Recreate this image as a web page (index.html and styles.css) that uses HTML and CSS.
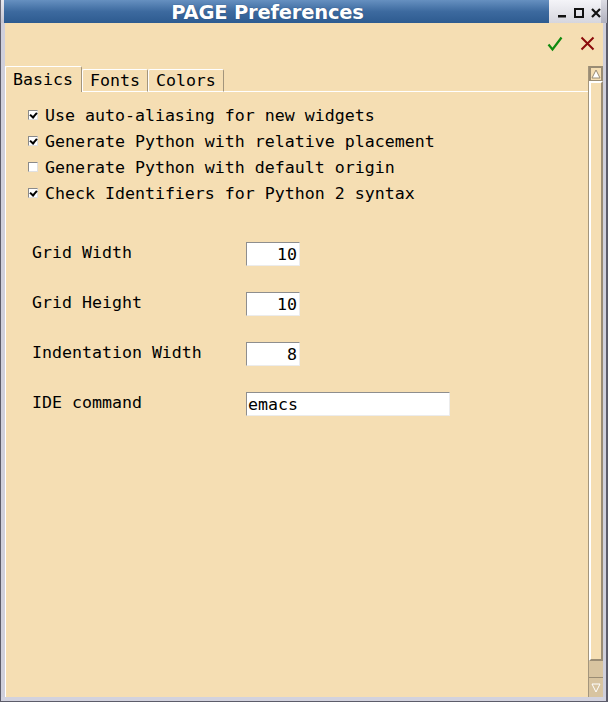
FILE: index.html
```html
<!DOCTYPE html>
<html>
<head>
<meta charset="utf-8">
<link rel="stylesheet" href="styles.css">
</head>
<body>
<div class="window">
  <div class="titlebar">
    <div class="tb-left"></div>
    <div class="tb-title">PAGE Preferences</div>
    <div class="tb-buttons">
      <svg width="9" height="10" viewBox="0 0 9 10"><rect x="0" y="7" width="8" height="2.5" fill="#111"/></svg>
      <svg width="10" height="10" viewBox="0 0 10 10"><rect x="1" y="1" width="8" height="8" fill="none" stroke="#111" stroke-width="2"/></svg>
      <svg width="10" height="10" viewBox="0 0 10 10"><path d="M1 1 L9 9 M9 1 L1 9" stroke="#111" stroke-width="2.2"/></svg>
    </div>
    <div class="tb-right"></div>
  </div>
  <div class="frame">
    <div class="border-left"></div>
    <div class="client">
      <div class="toolbar">
        <svg class="ok" width="16" height="16" viewBox="0 0 16 16"><path d="M1.5 8.5 L5.5 13.5 L14.5 1.5" fill="none" stroke="#0f8a0f" stroke-width="2.2"/></svg>
        <svg class="cancel" width="15" height="15" viewBox="0 0 15 15"><path d="M1.5 1.5 L13.5 13.5 M13.5 1.5 L1.5 13.5" fill="none" stroke="#8b0a0a" stroke-width="2"/></svg>
      </div>
      <div class="lower">
        <div class="notebook">
          <div class="tabs">
            <div class="tab active">Basics</div>
            <div class="tab">Fonts</div>
            <div class="tab">Colors</div>
            <div class="tab-fill"></div>
          </div>
          <div class="pane">
            <div class="checks">
              <label class="check"><span class="box on"></span>Use auto-aliasing for new widgets</label>
              <label class="check"><span class="box on"></span>Generate Python with relative placement</label>
              <label class="check"><span class="box"></span>Generate Python with default origin</label>
              <label class="check"><span class="box on"></span>Check Identifiers for Python 2 syntax</label>
            </div>
            <div class="form">
              <div class="row"><span class="lbl">Grid Width</span><span class="entry num">10</span></div>
              <div class="row"><span class="lbl">Grid Height</span><span class="entry num">10</span></div>
              <div class="row"><span class="lbl">Indentation Width</span><span class="entry num">8</span></div>
              <div class="row"><span class="lbl">IDE command</span><span class="entry wide">emacs</span></div>
            </div>
          </div>
        </div>
        <div class="scrollbar">
          <div class="arrow up"><svg width="10" height="10" viewBox="0 0 10 10"><path d="M1 9 L5 1 L9 9 Z" fill="#fff" stroke="#9a8c74" stroke-width="1"/></svg></div>
          <div class="slider"></div>
          <div class="trough"></div>
          <div class="arrow down"><svg width="10" height="10" viewBox="0 0 10 10"><path d="M1 1 L5 9 L9 1 Z" fill="#d8c4a0" stroke="#fff" stroke-width="1"/></svg></div>
        </div>
      </div>
    </div>
    <div class="border-right"></div>
  </div>
  <div class="border-bottom"></div>
</div>
</body>
</html>
```

FILE: styles.css
```css
html, body {
  margin: 0;
  padding: 0;
  background: #d4d4de;
}
.window {
  width: 608px;
  height: 702px;
  display: flex;
  flex-direction: column;
  font-family: "DejaVu Sans Mono", monospace;
  font-size: 16.6px;
  color: #000;
}
.titlebar {
  height: 23px;
  display: flex;
  flex: none;
}
.tb-left {
  width: 3px;
  background: linear-gradient(#e8e8ee, #c4c4d0);
  border-left: 1px solid #6a6a78;
}
.tb-title {
  flex: 1;
  background: linear-gradient(#6690c0, #3d6a9f 50%, #2d5b90);
  color: #fff;
  font-family: "DejaVu Sans", sans-serif;
  font-weight: bold;
  font-size: 19.5px;
  letter-spacing: -0.2px;
  text-align: center;
  line-height: 25px;
  padding-right: 18px;
  text-shadow: 0 0 1px #1d3d66;
  white-space: nowrap;
}
.tb-buttons {
  width: 52px;
  background: linear-gradient(#f4f4f8, #d6d6de);
  display: flex;
  align-items: center;
  justify-content: flex-start;
  padding-left: 9px;
  gap: 7px;
  padding-top: 3px;
  box-sizing: border-box;
}
.tb-right {
  width: 6px;
  background: linear-gradient(#dcdce4, #b0b0be);
  border-right: 1px solid #55555f;
}
.frame {
  flex: 1;
  display: flex;
  min-height: 0;
}
.border-left {
  width: 4px;
  background: #cfcfdb;
  border-left: 1px solid #5c5c6a;
}
.border-right {
  width: 3px;
  background: #cfcfdb;
  border-right: 2px solid #5c5c6a;
}
.border-bottom {
  height: 4px;
  background: #d2d2de;
  border-bottom: 1px solid #5c5c6a;
  border-left: 1px solid #5c5c6a;
  border-right: 2px solid #5c5c6a;
}
.client {
  flex: 1;
  background: #f5deb3;
  display: flex;
  flex-direction: column;
  min-width: 0;
}
.toolbar {
  height: 43px;
  flex: none;
  display: flex;
  justify-content: flex-end;
  align-items: flex-start;
  padding-top: 13px;
  padding-right: 8px;
  box-sizing: border-box;
  gap: 17px;
}
.lower {
  flex: 1;
  display: flex;
  min-height: 0;
}
.notebook {
  flex: 1;
  display: flex;
  flex-direction: column;
  border-left: 1px solid #fff;
}
.tabs {
  height: 26px;
  display: flex;
  align-items: flex-end;
  flex: none;
}
.tab {
  height: 23px;
  box-sizing: border-box;
  border-top: 1px solid #fff;
  border-left: 1px solid #fff;
  border-right: 1px solid #a3957c;
  border-bottom: 1px solid #fff;
  padding: 0 7px 0 7px;
  line-height: 22px;
  font-size: 16.6px;
  border-radius: 2px 2px 0 0;
}
.tab.active {
  height: 26px;
  border-bottom: none;
  line-height: 25px;
  padding: 0 8px 0 7px;
  margin-left: -1px;
}
.tab-fill {
  flex: 1;
  border-bottom: 1px solid #fff;
  height: 1px;
}
.pane {
  flex: 1;
  padding: 10px 0 0 22px;
}
.checks {
  display: flex;
  flex-direction: column;
}
.check {
  height: 26px;
  display: flex;
  align-items: center;
  gap: 7px;
  white-space: nowrap;
}
.box {
  width: 10px;
  height: 10px;
  box-sizing: border-box;
  background: #fff;
  border-top: 1px solid #8a8a8a;
  border-left: 1px solid #8a8a8a;
  border-right: 1px solid #e0e0e0;
  border-bottom: 1px solid #e0e0e0;
  position: relative;
  flex: none;
}
.box.on::after {
  content: "";
  position: absolute;
  left: 2px;
  top: 0px;
  width: 3px;
  height: 5px;
  border-right: 2px solid #000;
  border-bottom: 2px solid #000;
  transform: rotate(40deg);
}
.form {
  margin-top: 22px;
  padding-left: 4px;
  display: flex;
  flex-direction: column;
}
.row {
  height: 50px;
  display: flex;
  align-items: center;
}
.lbl {
  width: 214px;
  white-space: nowrap;
  margin-top: -2px;
}
.entry {
  height: 24px;
  box-sizing: border-box;
  background: #fff;
  border-top: 1px solid #8e8e8e;
  border-left: 1px solid #8e8e8e;
  border-right: 1px solid #ececec;
  border-bottom: 1px solid #ececec;
  line-height: 23px;
  margin-top: 2px;
}
.entry.num {
  width: 54px;
  text-align: right;
  padding-right: 2px;
}
.entry.wide {
  width: 204px;
  padding-left: 1px;
}
.scrollbar {
  width: 14px;
  display: flex;
  flex-direction: column;
  background: #d8c4a0;
  border-left: 1px solid #a3957c;
}
.arrow {
  height: 15px;
  display: flex;
  align-items: center;
  justify-content: center;
  flex: none;
  box-sizing: border-box;
}
.arrow.up {
  background: #f5deb3;
  border: 2px solid #9a8c74;
  border-bottom-width: 1px;
}
.arrow.down {
  height: 20px;
  border-top: 1px solid #9a8c74;
}
.slider {
  height: 580px;
  flex: none;
  background: #f5deb3;
  border-left: 2px solid #fff;
  border-top: 2px solid #fff;
  border-right: 2px solid #9a8c74;
  border-bottom: 2px solid #9a8c74;
  box-sizing: border-box;
}
.trough {
  flex: 1;
}
```
